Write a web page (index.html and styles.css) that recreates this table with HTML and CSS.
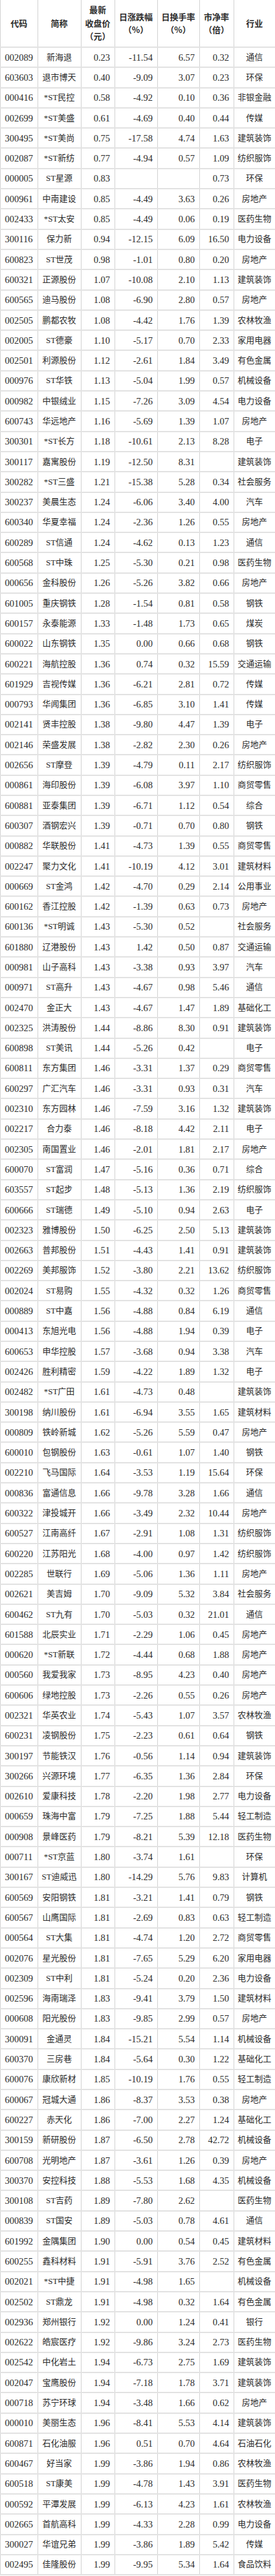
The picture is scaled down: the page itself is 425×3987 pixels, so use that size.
FILE: index.html
```html
<!DOCTYPE html>
<html lang="zh-CN">
<head>
<meta charset="utf-8">
<title>低价股一览</title>
<link rel="stylesheet" href="styles.css">
</head>
<body>
<table class="stock-table">
<colgroup>
<col class="w-code"><col class="w-name"><col class="w-price"><col class="w-chg"><col class="w-turn"><col class="w-pb"><col class="w-ind">
</colgroup>
<thead>
<tr class="head-row">
<th>代码</th><th>简称</th><th>最新<br>收盘价<br>（元）</th><th>日涨跌幅<br>（%）</th><th>日换手率<br>（%）</th><th>市净率<br>（倍）</th><th>行业</th>
</tr>
</thead>
<tbody>
<tr><td class="code">002089</td><td class="txt">新海退</td><td class="num">0.23</td><td class="num">-11.54</td><td class="num">6.57</td><td class="num">0.32</td><td class="txt">通信</td></tr>
<tr><td class="code">603603</td><td class="txt">退市博天</td><td class="num">0.40</td><td class="num">-9.09</td><td class="num">3.07</td><td class="num">0.23</td><td class="txt">环保</td></tr>
<tr><td class="code">000416</td><td class="txt">*ST民控</td><td class="num">0.58</td><td class="num">-4.92</td><td class="num">0.10</td><td class="num">0.36</td><td class="txt">非银金融</td></tr>
<tr><td class="code">002699</td><td class="txt">*ST美盛</td><td class="num">0.61</td><td class="num">-4.69</td><td class="num">0.40</td><td class="num">0.44</td><td class="txt">传媒</td></tr>
<tr><td class="code">300495</td><td class="txt">*ST美尚</td><td class="num">0.75</td><td class="num">-17.58</td><td class="num">4.74</td><td class="num">1.63</td><td class="txt">建筑装饰</td></tr>
<tr><td class="code">002087</td><td class="txt">*ST新纺</td><td class="num">0.77</td><td class="num">-4.94</td><td class="num">0.57</td><td class="num">1.09</td><td class="txt">纺织服饰</td></tr>
<tr><td class="code">000005</td><td class="txt">ST星源</td><td class="num">0.83</td><td class="num"></td><td class="num"></td><td class="num">0.73</td><td class="txt">环保</td></tr>
<tr><td class="code">000961</td><td class="txt">中南建设</td><td class="num">0.85</td><td class="num">-4.49</td><td class="num">3.63</td><td class="num">0.26</td><td class="txt">房地产</td></tr>
<tr><td class="code">002433</td><td class="txt">*ST太安</td><td class="num">0.85</td><td class="num">-4.49</td><td class="num">0.06</td><td class="num">0.19</td><td class="txt">医药生物</td></tr>
<tr><td class="code">300116</td><td class="txt">保力新</td><td class="num">0.94</td><td class="num">-12.15</td><td class="num">6.09</td><td class="num">16.50</td><td class="txt">电力设备</td></tr>
<tr><td class="code">600823</td><td class="txt">ST世茂</td><td class="num">0.98</td><td class="num">-1.01</td><td class="num">0.80</td><td class="num">0.20</td><td class="txt">房地产</td></tr>
<tr><td class="code">600321</td><td class="txt">正源股份</td><td class="num">1.07</td><td class="num">-10.08</td><td class="num">2.10</td><td class="num">1.13</td><td class="txt">建筑装饰</td></tr>
<tr><td class="code">600565</td><td class="txt">迪马股份</td><td class="num">1.08</td><td class="num">-6.90</td><td class="num">2.80</td><td class="num">0.57</td><td class="txt">房地产</td></tr>
<tr><td class="code">002505</td><td class="txt">鹏都农牧</td><td class="num">1.08</td><td class="num">-4.42</td><td class="num">1.76</td><td class="num">1.39</td><td class="txt">农林牧渔</td></tr>
<tr><td class="code">002005</td><td class="txt">ST德豪</td><td class="num">1.10</td><td class="num">-5.17</td><td class="num">0.70</td><td class="num">2.33</td><td class="txt">家用电器</td></tr>
<tr><td class="code">002501</td><td class="txt">利源股份</td><td class="num">1.12</td><td class="num">-2.61</td><td class="num">1.84</td><td class="num">3.49</td><td class="txt">有色金属</td></tr>
<tr><td class="code">000976</td><td class="txt">ST华铁</td><td class="num">1.13</td><td class="num">-5.04</td><td class="num">1.99</td><td class="num">0.57</td><td class="txt">机械设备</td></tr>
<tr><td class="code">000982</td><td class="txt">中银绒业</td><td class="num">1.15</td><td class="num">-7.26</td><td class="num">3.09</td><td class="num">4.54</td><td class="txt">电力设备</td></tr>
<tr><td class="code">600743</td><td class="txt">华远地产</td><td class="num">1.16</td><td class="num">-5.69</td><td class="num">1.39</td><td class="num">1.07</td><td class="txt">房地产</td></tr>
<tr><td class="code">300301</td><td class="txt">*ST长方</td><td class="num">1.18</td><td class="num">-10.61</td><td class="num">2.13</td><td class="num">8.28</td><td class="txt">电子</td></tr>
<tr><td class="code">300117</td><td class="txt">嘉寓股份</td><td class="num">1.19</td><td class="num">-12.50</td><td class="num">8.31</td><td class="num"></td><td class="txt">建筑装饰</td></tr>
<tr><td class="code">300282</td><td class="txt">*ST三盛</td><td class="num">1.21</td><td class="num">-15.38</td><td class="num">5.28</td><td class="num">0.34</td><td class="txt">社会服务</td></tr>
<tr><td class="code">300237</td><td class="txt">美晨生态</td><td class="num">1.24</td><td class="num">-6.06</td><td class="num">3.40</td><td class="num">4.00</td><td class="txt">汽车</td></tr>
<tr><td class="code">600340</td><td class="txt">华夏幸福</td><td class="num">1.24</td><td class="num">-2.36</td><td class="num">1.26</td><td class="num">0.55</td><td class="txt">房地产</td></tr>
<tr><td class="code">600289</td><td class="txt">ST信通</td><td class="num">1.24</td><td class="num">-4.62</td><td class="num">0.13</td><td class="num">1.23</td><td class="txt">通信</td></tr>
<tr><td class="code">600568</td><td class="txt">ST中珠</td><td class="num">1.25</td><td class="num">-5.30</td><td class="num">0.21</td><td class="num">0.98</td><td class="txt">医药生物</td></tr>
<tr><td class="code">000656</td><td class="txt">金科股份</td><td class="num">1.26</td><td class="num">-5.26</td><td class="num">3.82</td><td class="num">0.66</td><td class="txt">房地产</td></tr>
<tr><td class="code">601005</td><td class="txt">重庆钢铁</td><td class="num">1.28</td><td class="num">-1.54</td><td class="num">0.81</td><td class="num">0.58</td><td class="txt">钢铁</td></tr>
<tr><td class="code">600157</td><td class="txt">永泰能源</td><td class="num">1.33</td><td class="num">-1.48</td><td class="num">1.73</td><td class="num">0.65</td><td class="txt">煤炭</td></tr>
<tr><td class="code">600022</td><td class="txt">山东钢铁</td><td class="num">1.35</td><td class="num">0.00</td><td class="num">0.66</td><td class="num">0.68</td><td class="txt">钢铁</td></tr>
<tr><td class="code">600221</td><td class="txt">海航控股</td><td class="num">1.36</td><td class="num">0.74</td><td class="num">0.32</td><td class="num">15.59</td><td class="txt">交通运输</td></tr>
<tr><td class="code">601929</td><td class="txt">吉视传媒</td><td class="num">1.36</td><td class="num">-6.21</td><td class="num">2.81</td><td class="num">0.72</td><td class="txt">传媒</td></tr>
<tr><td class="code">000793</td><td class="txt">华闻集团</td><td class="num">1.36</td><td class="num">-6.85</td><td class="num">3.10</td><td class="num">1.41</td><td class="txt">传媒</td></tr>
<tr><td class="code">002141</td><td class="txt">贤丰控股</td><td class="num">1.38</td><td class="num">-9.80</td><td class="num">4.47</td><td class="num">1.39</td><td class="txt">电子</td></tr>
<tr><td class="code">002146</td><td class="txt">荣盛发展</td><td class="num">1.38</td><td class="num">-2.82</td><td class="num">2.30</td><td class="num">0.26</td><td class="txt">房地产</td></tr>
<tr><td class="code">002656</td><td class="txt">ST摩登</td><td class="num">1.39</td><td class="num">-4.79</td><td class="num">0.11</td><td class="num">2.17</td><td class="txt">纺织服饰</td></tr>
<tr><td class="code">000861</td><td class="txt">海印股份</td><td class="num">1.39</td><td class="num">-6.08</td><td class="num">3.97</td><td class="num">1.10</td><td class="txt">商贸零售</td></tr>
<tr><td class="code">600881</td><td class="txt">亚泰集团</td><td class="num">1.39</td><td class="num">-6.71</td><td class="num">1.12</td><td class="num">0.54</td><td class="txt">综合</td></tr>
<tr><td class="code">600307</td><td class="txt">酒钢宏兴</td><td class="num">1.39</td><td class="num">-0.71</td><td class="num">0.70</td><td class="num">0.80</td><td class="txt">钢铁</td></tr>
<tr><td class="code">000882</td><td class="txt">华联股份</td><td class="num">1.41</td><td class="num">-4.73</td><td class="num">1.39</td><td class="num">0.55</td><td class="txt">商贸零售</td></tr>
<tr><td class="code">002247</td><td class="txt">聚力文化</td><td class="num">1.41</td><td class="num">-10.19</td><td class="num">4.12</td><td class="num">3.01</td><td class="txt">建筑材料</td></tr>
<tr><td class="code">000669</td><td class="txt">ST金鸿</td><td class="num">1.42</td><td class="num">-4.70</td><td class="num">0.29</td><td class="num">2.14</td><td class="txt">公用事业</td></tr>
<tr><td class="code">600162</td><td class="txt">香江控股</td><td class="num">1.42</td><td class="num">-1.39</td><td class="num">0.63</td><td class="num">0.73</td><td class="txt">房地产</td></tr>
<tr><td class="code">600136</td><td class="txt">*ST明诚</td><td class="num">1.43</td><td class="num">-5.30</td><td class="num">0.52</td><td class="num"></td><td class="txt">社会服务</td></tr>
<tr><td class="code">601880</td><td class="txt">辽港股份</td><td class="num">1.43</td><td class="num">1.42</td><td class="num">0.50</td><td class="num">0.87</td><td class="txt">交通运输</td></tr>
<tr><td class="code">000981</td><td class="txt">山子高科</td><td class="num">1.43</td><td class="num">-3.38</td><td class="num">0.93</td><td class="num">3.97</td><td class="txt">汽车</td></tr>
<tr><td class="code">000971</td><td class="txt">ST高升</td><td class="num">1.43</td><td class="num">-4.67</td><td class="num">0.98</td><td class="num">5.46</td><td class="txt">通信</td></tr>
<tr><td class="code">002470</td><td class="txt">金正大</td><td class="num">1.43</td><td class="num">-4.67</td><td class="num">1.47</td><td class="num">1.89</td><td class="txt">基础化工</td></tr>
<tr><td class="code">002325</td><td class="txt">洪涛股份</td><td class="num">1.44</td><td class="num">-8.86</td><td class="num">8.30</td><td class="num">0.91</td><td class="txt">建筑装饰</td></tr>
<tr><td class="code">600898</td><td class="txt">ST美讯</td><td class="num">1.44</td><td class="num">-5.26</td><td class="num">0.42</td><td class="num"></td><td class="txt">电子</td></tr>
<tr><td class="code">600811</td><td class="txt">东方集团</td><td class="num">1.46</td><td class="num">-3.31</td><td class="num">1.37</td><td class="num">0.29</td><td class="txt">商贸零售</td></tr>
<tr><td class="code">600297</td><td class="txt">广汇汽车</td><td class="num">1.46</td><td class="num">-3.31</td><td class="num">0.93</td><td class="num">0.31</td><td class="txt">汽车</td></tr>
<tr><td class="code">002310</td><td class="txt">东方园林</td><td class="num">1.46</td><td class="num">-7.59</td><td class="num">3.16</td><td class="num">1.32</td><td class="txt">建筑装饰</td></tr>
<tr><td class="code">002217</td><td class="txt">合力泰</td><td class="num">1.46</td><td class="num">-8.18</td><td class="num">4.42</td><td class="num">2.11</td><td class="txt">电子</td></tr>
<tr><td class="code">002305</td><td class="txt">南国置业</td><td class="num">1.46</td><td class="num">-2.01</td><td class="num">1.81</td><td class="num">2.17</td><td class="txt">房地产</td></tr>
<tr><td class="code">600070</td><td class="txt">ST富润</td><td class="num">1.47</td><td class="num">-5.16</td><td class="num">0.36</td><td class="num">0.71</td><td class="txt">综合</td></tr>
<tr><td class="code">603557</td><td class="txt">ST起步</td><td class="num">1.48</td><td class="num">-5.13</td><td class="num">1.36</td><td class="num">2.19</td><td class="txt">纺织服饰</td></tr>
<tr><td class="code">600666</td><td class="txt">ST瑞德</td><td class="num">1.49</td><td class="num">-5.10</td><td class="num">0.94</td><td class="num">2.63</td><td class="txt">电子</td></tr>
<tr><td class="code">002323</td><td class="txt">雅博股份</td><td class="num">1.50</td><td class="num">-6.25</td><td class="num">2.50</td><td class="num">5.13</td><td class="txt">建筑装饰</td></tr>
<tr><td class="code">002663</td><td class="txt">普邦股份</td><td class="num">1.51</td><td class="num">-4.43</td><td class="num">1.41</td><td class="num">0.91</td><td class="txt">建筑装饰</td></tr>
<tr><td class="code">002269</td><td class="txt">美邦服饰</td><td class="num">1.52</td><td class="num">-3.80</td><td class="num">2.21</td><td class="num">13.62</td><td class="txt">纺织服饰</td></tr>
<tr><td class="code">002024</td><td class="txt">ST易购</td><td class="num">1.55</td><td class="num">-4.32</td><td class="num">0.32</td><td class="num">1.26</td><td class="txt">商贸零售</td></tr>
<tr><td class="code">000889</td><td class="txt">ST中嘉</td><td class="num">1.56</td><td class="num">-4.88</td><td class="num">0.84</td><td class="num">6.19</td><td class="txt">通信</td></tr>
<tr><td class="code">000413</td><td class="txt">东旭光电</td><td class="num">1.56</td><td class="num">-4.88</td><td class="num">1.94</td><td class="num">0.39</td><td class="txt">电子</td></tr>
<tr><td class="code">600653</td><td class="txt">申华控股</td><td class="num">1.57</td><td class="num">-3.68</td><td class="num">0.94</td><td class="num">3.38</td><td class="txt">汽车</td></tr>
<tr><td class="code">002426</td><td class="txt">胜利精密</td><td class="num">1.59</td><td class="num">-4.22</td><td class="num">1.89</td><td class="num">1.32</td><td class="txt">电子</td></tr>
<tr><td class="code">002482</td><td class="txt">*ST广田</td><td class="num">1.61</td><td class="num">-4.73</td><td class="num">0.48</td><td class="num"></td><td class="txt">建筑装饰</td></tr>
<tr><td class="code">300198</td><td class="txt">纳川股份</td><td class="num">1.61</td><td class="num">-6.94</td><td class="num">3.55</td><td class="num">1.65</td><td class="txt">建筑材料</td></tr>
<tr><td class="code">000809</td><td class="txt">铁岭新城</td><td class="num">1.62</td><td class="num">-5.26</td><td class="num">5.59</td><td class="num">0.47</td><td class="txt">房地产</td></tr>
<tr><td class="code">600010</td><td class="txt">包钢股份</td><td class="num">1.63</td><td class="num">-0.61</td><td class="num">1.07</td><td class="num">1.40</td><td class="txt">钢铁</td></tr>
<tr><td class="code">002210</td><td class="txt">飞马国际</td><td class="num">1.64</td><td class="num">-3.53</td><td class="num">1.19</td><td class="num">15.64</td><td class="txt">环保</td></tr>
<tr><td class="code">000836</td><td class="txt">富通信息</td><td class="num">1.66</td><td class="num">-9.78</td><td class="num">3.28</td><td class="num">1.66</td><td class="txt">通信</td></tr>
<tr><td class="code">600322</td><td class="txt">津投城开</td><td class="num">1.66</td><td class="num">-3.49</td><td class="num">2.32</td><td class="num">10.44</td><td class="txt">房地产</td></tr>
<tr><td class="code">600527</td><td class="txt">江南高纤</td><td class="num">1.67</td><td class="num">-2.91</td><td class="num">1.08</td><td class="num">1.31</td><td class="txt">纺织服饰</td></tr>
<tr><td class="code">600220</td><td class="txt">江苏阳光</td><td class="num">1.68</td><td class="num">-4.00</td><td class="num">0.97</td><td class="num">1.42</td><td class="txt">纺织服饰</td></tr>
<tr><td class="code">002285</td><td class="txt">世联行</td><td class="num">1.69</td><td class="num">-5.06</td><td class="num">1.36</td><td class="num">1.11</td><td class="txt">房地产</td></tr>
<tr><td class="code">002621</td><td class="txt">美吉姆</td><td class="num">1.70</td><td class="num">-9.09</td><td class="num">5.32</td><td class="num">3.84</td><td class="txt">社会服务</td></tr>
<tr><td class="code">600462</td><td class="txt">ST九有</td><td class="num">1.70</td><td class="num">-5.03</td><td class="num">0.32</td><td class="num">21.01</td><td class="txt">通信</td></tr>
<tr><td class="code">601588</td><td class="txt">北辰实业</td><td class="num">1.71</td><td class="num">-2.29</td><td class="num">1.06</td><td class="num">0.45</td><td class="txt">房地产</td></tr>
<tr><td class="code">000620</td><td class="txt">*ST新联</td><td class="num">1.72</td><td class="num">-4.44</td><td class="num">0.68</td><td class="num">1.88</td><td class="txt">房地产</td></tr>
<tr><td class="code">000560</td><td class="txt">我爱我家</td><td class="num">1.73</td><td class="num">-8.95</td><td class="num">4.23</td><td class="num">0.40</td><td class="txt">房地产</td></tr>
<tr><td class="code">600606</td><td class="txt">绿地控股</td><td class="num">1.73</td><td class="num">-2.26</td><td class="num">0.55</td><td class="num">0.26</td><td class="txt">房地产</td></tr>
<tr><td class="code">002321</td><td class="txt">华英农业</td><td class="num">1.74</td><td class="num">-5.43</td><td class="num">1.07</td><td class="num">3.57</td><td class="txt">农林牧渔</td></tr>
<tr><td class="code">600231</td><td class="txt">凌钢股份</td><td class="num">1.75</td><td class="num">-2.23</td><td class="num">0.61</td><td class="num">0.64</td><td class="txt">钢铁</td></tr>
<tr><td class="code">300197</td><td class="txt">节能铁汉</td><td class="num">1.76</td><td class="num">-0.56</td><td class="num">1.14</td><td class="num">0.94</td><td class="txt">建筑装饰</td></tr>
<tr><td class="code">300266</td><td class="txt">兴源环境</td><td class="num">1.77</td><td class="num">-6.35</td><td class="num">1.36</td><td class="num">2.84</td><td class="txt">环保</td></tr>
<tr><td class="code">002610</td><td class="txt">爱康科技</td><td class="num">1.78</td><td class="num">-2.20</td><td class="num">1.98</td><td class="num">2.77</td><td class="txt">电力设备</td></tr>
<tr><td class="code">000659</td><td class="txt">珠海中富</td><td class="num">1.79</td><td class="num">-7.25</td><td class="num">1.88</td><td class="num">5.44</td><td class="txt">轻工制造</td></tr>
<tr><td class="code">000908</td><td class="txt">景峰医药</td><td class="num">1.79</td><td class="num">-8.21</td><td class="num">5.39</td><td class="num">12.18</td><td class="txt">医药生物</td></tr>
<tr><td class="code">000711</td><td class="txt">*ST京蓝</td><td class="num">1.80</td><td class="num">-3.74</td><td class="num">1.61</td><td class="num"></td><td class="txt">环保</td></tr>
<tr><td class="code">300167</td><td class="txt">ST迪威迅</td><td class="num">1.80</td><td class="num">-14.29</td><td class="num">5.76</td><td class="num">9.83</td><td class="txt">计算机</td></tr>
<tr><td class="code">600569</td><td class="txt">安阳钢铁</td><td class="num">1.81</td><td class="num">-3.21</td><td class="num">1.41</td><td class="num">0.79</td><td class="txt">钢铁</td></tr>
<tr><td class="code">600567</td><td class="txt">山鹰国际</td><td class="num">1.81</td><td class="num">-2.69</td><td class="num">0.83</td><td class="num">0.63</td><td class="txt">轻工制造</td></tr>
<tr><td class="code">000564</td><td class="txt">ST大集</td><td class="num">1.81</td><td class="num">-4.74</td><td class="num">1.20</td><td class="num">2.72</td><td class="txt">商贸零售</td></tr>
<tr><td class="code">002076</td><td class="txt">星光股份</td><td class="num">1.81</td><td class="num">-7.65</td><td class="num">5.29</td><td class="num">6.20</td><td class="txt">家用电器</td></tr>
<tr><td class="code">002309</td><td class="txt">ST中利</td><td class="num">1.81</td><td class="num">-5.24</td><td class="num">0.20</td><td class="num">2.36</td><td class="txt">电力设备</td></tr>
<tr><td class="code">002596</td><td class="txt">海南瑞泽</td><td class="num">1.83</td><td class="num">-9.41</td><td class="num">3.79</td><td class="num">1.50</td><td class="txt">建筑材料</td></tr>
<tr><td class="code">000608</td><td class="txt">阳光股份</td><td class="num">1.83</td><td class="num">-9.85</td><td class="num">2.99</td><td class="num">0.57</td><td class="txt">房地产</td></tr>
<tr><td class="code">300091</td><td class="txt">金通灵</td><td class="num">1.84</td><td class="num">-15.21</td><td class="num">5.54</td><td class="num">1.14</td><td class="txt">机械设备</td></tr>
<tr><td class="code">600370</td><td class="txt">三房巷</td><td class="num">1.84</td><td class="num">-5.64</td><td class="num">0.30</td><td class="num">1.22</td><td class="txt">基础化工</td></tr>
<tr><td class="code">600076</td><td class="txt">康欣新材</td><td class="num">1.85</td><td class="num">-10.19</td><td class="num">1.76</td><td class="num">0.55</td><td class="txt">轻工制造</td></tr>
<tr><td class="code">600067</td><td class="txt">冠城大通</td><td class="num">1.86</td><td class="num">-8.37</td><td class="num">3.53</td><td class="num">0.38</td><td class="txt">房地产</td></tr>
<tr><td class="code">600227</td><td class="txt">赤天化</td><td class="num">1.86</td><td class="num">-7.00</td><td class="num">2.27</td><td class="num">1.24</td><td class="txt">基础化工</td></tr>
<tr><td class="code">300159</td><td class="txt">新研股份</td><td class="num">1.87</td><td class="num">-6.50</td><td class="num">2.78</td><td class="num">42.72</td><td class="txt">机械设备</td></tr>
<tr><td class="code">600708</td><td class="txt">光明地产</td><td class="num">1.87</td><td class="num">-3.61</td><td class="num">1.26</td><td class="num">0.39</td><td class="txt">房地产</td></tr>
<tr><td class="code">300370</td><td class="txt">安控科技</td><td class="num">1.88</td><td class="num">-5.53</td><td class="num">1.68</td><td class="num">4.35</td><td class="txt">机械设备</td></tr>
<tr><td class="code">300108</td><td class="txt">ST吉药</td><td class="num">1.89</td><td class="num">-7.80</td><td class="num">2.62</td><td class="num"></td><td class="txt">医药生物</td></tr>
<tr><td class="code">000839</td><td class="txt">ST国安</td><td class="num">1.89</td><td class="num">-5.03</td><td class="num">0.78</td><td class="num">4.61</td><td class="txt">通信</td></tr>
<tr><td class="code">601992</td><td class="txt">金隅集团</td><td class="num">1.90</td><td class="num">0.00</td><td class="num">0.54</td><td class="num">0.45</td><td class="txt">建筑材料</td></tr>
<tr><td class="code">600255</td><td class="txt">鑫科材料</td><td class="num">1.91</td><td class="num">-5.91</td><td class="num">3.76</td><td class="num">2.52</td><td class="txt">有色金属</td></tr>
<tr><td class="code">002021</td><td class="txt">*ST中捷</td><td class="num">1.91</td><td class="num">-4.98</td><td class="num">1.65</td><td class="num"></td><td class="txt">机械设备</td></tr>
<tr><td class="code">002502</td><td class="txt">ST鼎龙</td><td class="num">1.91</td><td class="num">-4.98</td><td class="num">0.32</td><td class="num">1.64</td><td class="txt">有色金属</td></tr>
<tr><td class="code">002936</td><td class="txt">郑州银行</td><td class="num">1.92</td><td class="num">0.00</td><td class="num">1.24</td><td class="num">0.41</td><td class="txt">银行</td></tr>
<tr><td class="code">002622</td><td class="txt">皓宸医疗</td><td class="num">1.92</td><td class="num">-9.86</td><td class="num">3.24</td><td class="num">2.73</td><td class="txt">医药生物</td></tr>
<tr><td class="code">002542</td><td class="txt">中化岩土</td><td class="num">1.94</td><td class="num">-6.73</td><td class="num">2.75</td><td class="num">1.69</td><td class="txt">建筑装饰</td></tr>
<tr><td class="code">002047</td><td class="txt">宝鹰股份</td><td class="num">1.94</td><td class="num">-7.18</td><td class="num">1.78</td><td class="num">3.71</td><td class="txt">建筑装饰</td></tr>
<tr><td class="code">000718</td><td class="txt">苏宁环球</td><td class="num">1.94</td><td class="num">-3.48</td><td class="num">1.66</td><td class="num">0.62</td><td class="txt">房地产</td></tr>
<tr><td class="code">000010</td><td class="txt">美丽生态</td><td class="num">1.96</td><td class="num">-8.41</td><td class="num">5.53</td><td class="num">4.14</td><td class="txt">建筑装饰</td></tr>
<tr><td class="code">600871</td><td class="txt">石化油服</td><td class="num">1.96</td><td class="num">0.51</td><td class="num">0.70</td><td class="num">4.64</td><td class="txt">石油石化</td></tr>
<tr><td class="code">600467</td><td class="txt">好当家</td><td class="num">1.99</td><td class="num">-3.86</td><td class="num">1.94</td><td class="num">0.86</td><td class="txt">农林牧渔</td></tr>
<tr><td class="code">600518</td><td class="txt">ST康美</td><td class="num">1.99</td><td class="num">-4.78</td><td class="num">1.43</td><td class="num">3.91</td><td class="txt">医药生物</td></tr>
<tr><td class="code">000592</td><td class="txt">平潭发展</td><td class="num">1.99</td><td class="num">-6.13</td><td class="num">4.23</td><td class="num">1.61</td><td class="txt">农林牧渔</td></tr>
<tr><td class="code">002665</td><td class="txt">首航高科</td><td class="num">1.99</td><td class="num">-4.33</td><td class="num">2.28</td><td class="num">0.99</td><td class="txt">电力设备</td></tr>
<tr><td class="code">300027</td><td class="txt">华谊兄弟</td><td class="num">1.99</td><td class="num">-3.86</td><td class="num">1.89</td><td class="num">5.42</td><td class="txt">传媒</td></tr>
<tr><td class="code">002495</td><td class="txt">佳隆股份</td><td class="num">1.99</td><td class="num">-9.95</td><td class="num">5.34</td><td class="num">1.64</td><td class="txt">食品饮料</td></tr>
</tbody>
</table>
</body>
</html>
```
FILE: styles.css
```css
html, body {
  margin: 0;
  padding: 0;
  background: #ffffff;
}

.stock-table {
  width: 425px;
  table-layout: fixed;
  border-collapse: collapse;
  color: #2b2b2b;
  font-family: "Liberation Serif", "Noto Sans CJK SC", serif;
}

.w-code { width: 57.5px; }
.w-name { width: 67px; }
.w-price { width: 52px; }
.w-chg { width: 66px; }
.w-turn { width: 65px; }
.w-pb { width: 53px; }
.w-ind { width: 64.5px; }

.stock-table th,
.stock-table td {
  border-left: 1px solid #d2d2d2;
  border-right: 1px solid #d2d2d2;
  border-bottom: 2px solid #e2e2e2;
  white-space: nowrap;
  overflow: hidden;
  box-sizing: border-box;
}

.head-row th {
  height: 73px;
  padding: 0;
  font-family: "Noto Sans CJK SC", sans-serif;
  font-weight: 700;
  font-size: 13px;
  line-height: 20.5px;
  text-align: center;
  vertical-align: middle;
  color: #2b2b2b;
}

.stock-table tbody tr {
  height: 31.31px;
}

.stock-table td {
  padding: 0;
  vertical-align: middle;
  line-height: 18px;
}

.stock-table td.code {
  text-align: left;
  padding-left: 6.5px;
  font-size: 14.5px;
}

.stock-table td.num {
  text-align: right;
  padding-right: 6.5px;
  font-size: 14.5px;
}

.stock-table td.txt {
  text-align: center;
  font-size: 13px;
  font-family: "Liberation Serif", "Noto Sans CJK SC", serif;
}
```
